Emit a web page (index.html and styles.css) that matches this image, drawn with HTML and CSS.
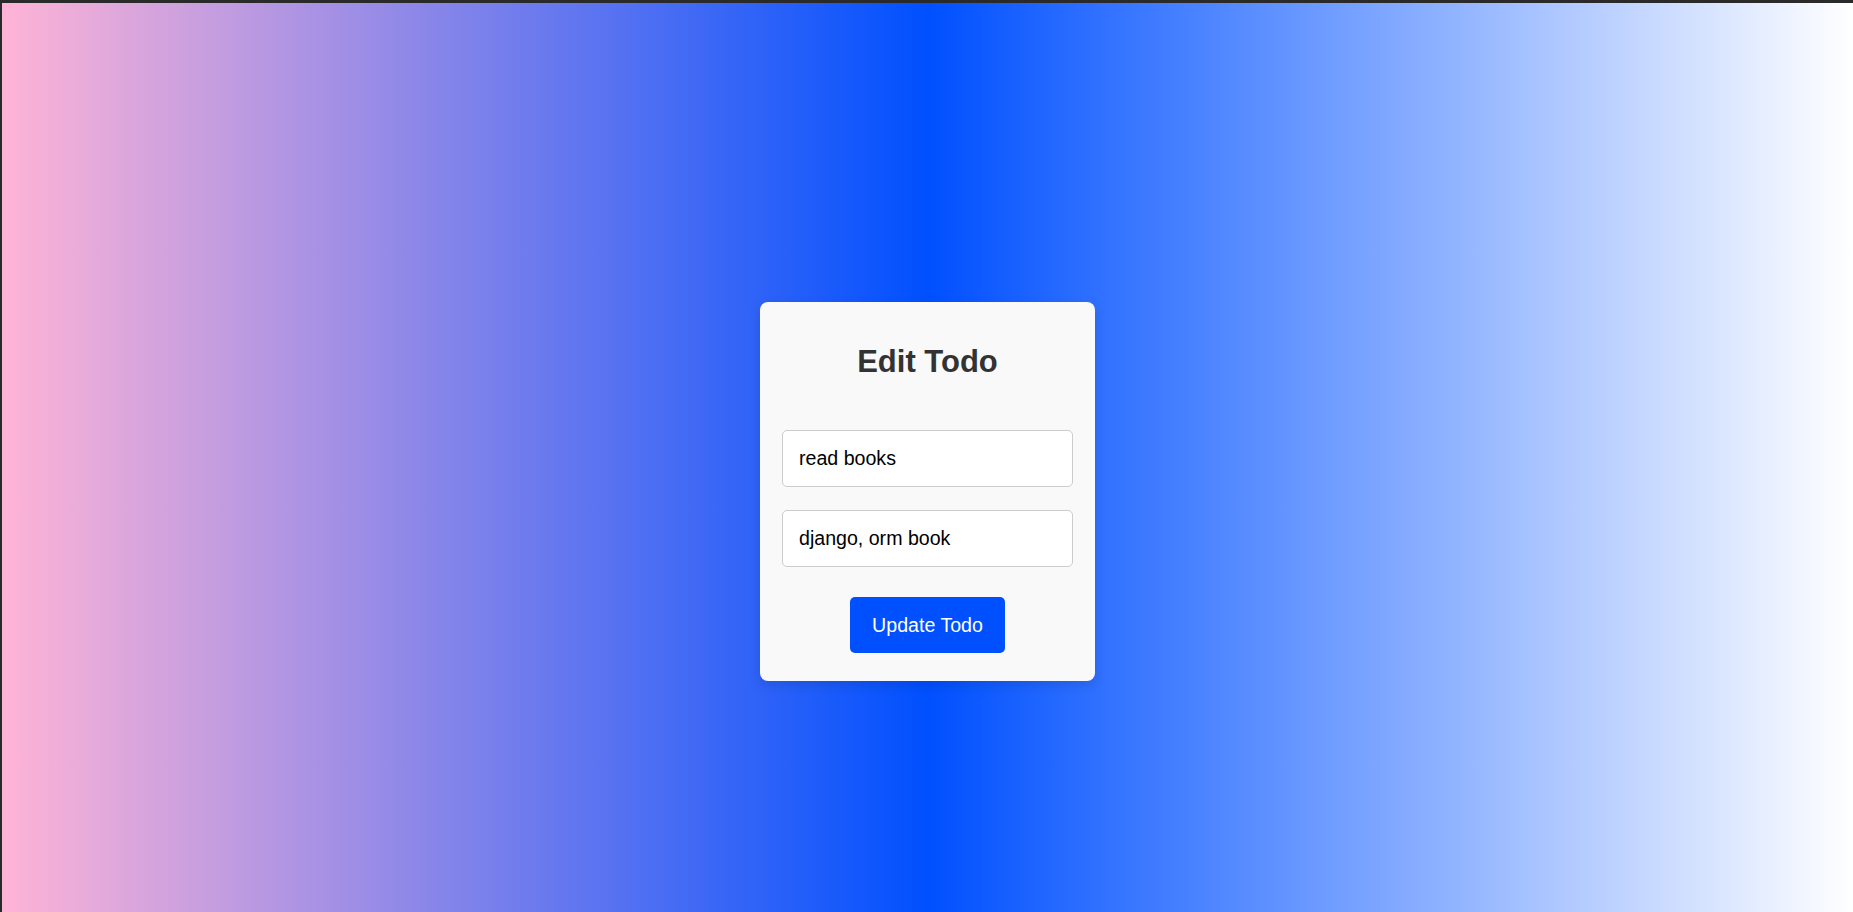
FILE: index.html
```html
<!DOCTYPE html>
<html lang="en">
<head>
<meta charset="utf-8">
<title>Edit Todo</title>
<link rel="stylesheet" href="styles.css">
</head>
<body>
<div class="page">
  <div class="card">
    <h2 class="title">Edit Todo</h2>
    <form class="form">
      <input class="field" type="text" value="read books">
      <input class="field" type="text" value="django, orm book">
      <button class="btn" type="button">Update Todo</button>
    </form>
  </div>
</div>
</body>
</html>
```

FILE: styles.css
```css
html, body {
  margin: 0;
  padding: 0;
  height: 100%;
}
body {
  font-family: "Liberation Sans", Arial, sans-serif;
  background: #2a2a2a;
}
.page {
  box-sizing: border-box;
  height: 912px;
  border-top: 3px solid #2a2a2a;
  border-left: 2px solid #2a2a2a;
  background: linear-gradient(to right, #ffb4d6 0%, #0050ff 50%, #ffffff 100%);
  display: flex;
  justify-content: center;
  align-items: flex-start;
  padding-top: 299px;
}
.card {
  box-sizing: border-box;
  width: 335px;
  height: 379px;
  background: #f9f9f9;
  border-radius: 8px;
  box-shadow: 0 4px 12px rgba(0, 0, 0, 0.12);
  padding: 20px 22px 0;
  display: flex;
  flex-direction: column;
  align-items: stretch;
}
.title {
  margin: 22px 0 0;
  font-size: 31px;
  line-height: 36px;
  font-weight: bold;
  color: #333;
  text-align: center;
}
.form {
  margin-top: 50px;
  display: flex;
  flex-direction: column;
  align-items: center;
  gap: 23px;
}
.field {
  box-sizing: border-box;
  width: 100%;
  height: 57px;
  margin: 0;
  padding: 0 16px;
  border: 1px solid #ccc;
  border-radius: 5px;
  background: #fff;
  font-family: "Liberation Sans", Arial, sans-serif;
  font-size: 19.6px;
  color: #000;
  outline: none;
}
.btn {
  box-sizing: border-box;
  margin-top: 7px;
  height: 56px;
  width: 155px;
  padding: 0;
  border: none;
  border-radius: 5px;
  background: #0050ff;
  color: #fff;
  font-family: "Liberation Sans", Arial, sans-serif;
  font-size: 19.6px;
  cursor: pointer;
}
```
